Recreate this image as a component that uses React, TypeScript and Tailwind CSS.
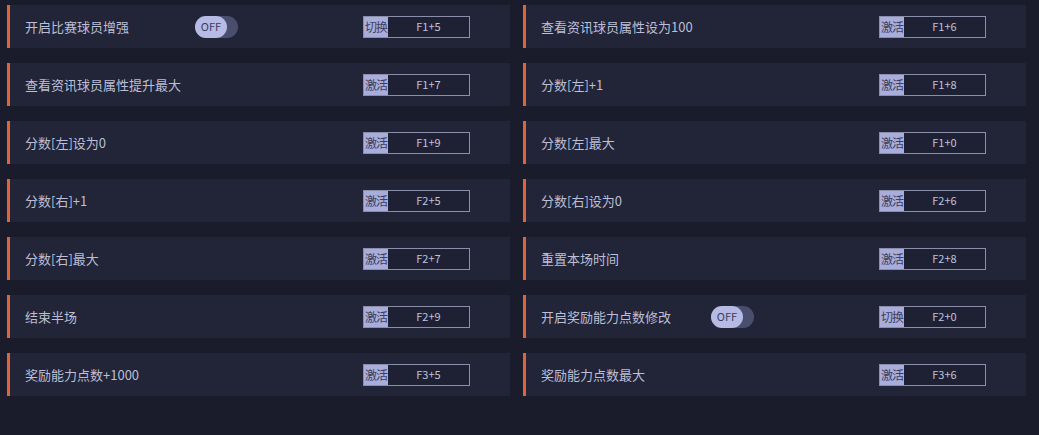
type Row = { label: string; kind: "激活" | "切换"; keys: string; toggle?: boolean };

const left: Row[] = [
  { label: "开启比赛球员增强", kind: "切换", keys: "F1+5", toggle: true },
  { label: "查看资讯球员属性提升最大", kind: "激活", keys: "F1+7" },
  { label: "分数[左]设为0", kind: "激活", keys: "F1+9" },
  { label: "分数[右]+1", kind: "激活", keys: "F2+5" },
  { label: "分数[右]最大", kind: "激活", keys: "F2+7" },
  { label: "结束半场", kind: "激活", keys: "F2+9" },
  { label: "奖励能力点数+1000", kind: "激活", keys: "F3+5" },
];

const right: Row[] = [
  { label: "查看资讯球员属性设为100", kind: "激活", keys: "F1+6" },
  { label: "分数[左]+1", kind: "激活", keys: "F1+8" },
  { label: "分数[左]最大", kind: "激活", keys: "F1+0" },
  { label: "分数[右]设为0", kind: "激活", keys: "F2+6" },
  { label: "重置本场时间", kind: "激活", keys: "F2+8" },
  { label: "开启奖励能力点数修改", kind: "切换", keys: "F2+0", toggle: true },
  { label: "奖励能力点数最大", kind: "激活", keys: "F3+6" },
];

function Toggle() {
  return (
    <div className="relative h-[22px] w-[43px] rounded-full bg-[#4a4e6e]">
      <div className="absolute left-0 top-0 flex h-[22px] w-[32px] items-center justify-center rounded-full bg-[#b6bae4] text-[11px] text-[#3a3d5c]">
        OFF
      </div>
    </div>
  );
}

function HotkeyRow({ row }: { row: Row }) {
  return (
    <div className="flex h-[43px] items-stretch">
      <div className="w-[3px] bg-[#e0643a]" />
      <div className="flex flex-1 items-center bg-[#222438] pl-[15px] pr-[40px]">
        <span className="w-[170px] shrink-0 whitespace-nowrap text-[13px] text-[#bcbfd6]">
          {row.label}
        </span>
        {row.toggle && <Toggle />}
        <div className="ml-auto flex h-[22px] w-[107px] border border-[#8a8ea8]">
          <span className="flex w-[24px] items-center justify-center bg-[#a9addb] text-[12px] tracking-[-1px] text-[#3c3f60]">
            {row.kind}
          </span>
          <span className="flex flex-1 items-center justify-center bg-[#1e2034] text-[11px] text-[#c0c3d8]">
            {row.keys}
          </span>
        </div>
      </div>
    </div>
  );
}

export default function App() {
  return (
    <div
      className="h-[435px] w-[1039px] bg-[#1a1c2b] pl-[7px] pt-[5px]"
      style={{ fontFamily: '"Noto Sans CJK SC", "Noto Sans", sans-serif' }}
    >
      <div className="grid w-[1019px] grid-cols-2 gap-x-[13px]">
        <div className="flex flex-col gap-[15px]">
          {left.map((r) => (
            <HotkeyRow key={r.label} row={r} />
          ))}
        </div>
        <div className="flex flex-col gap-[15px]">
          {right.map((r) => (
            <HotkeyRow key={r.label} row={r} />
          ))}
        </div>
      </div>
    </div>
  );
}
